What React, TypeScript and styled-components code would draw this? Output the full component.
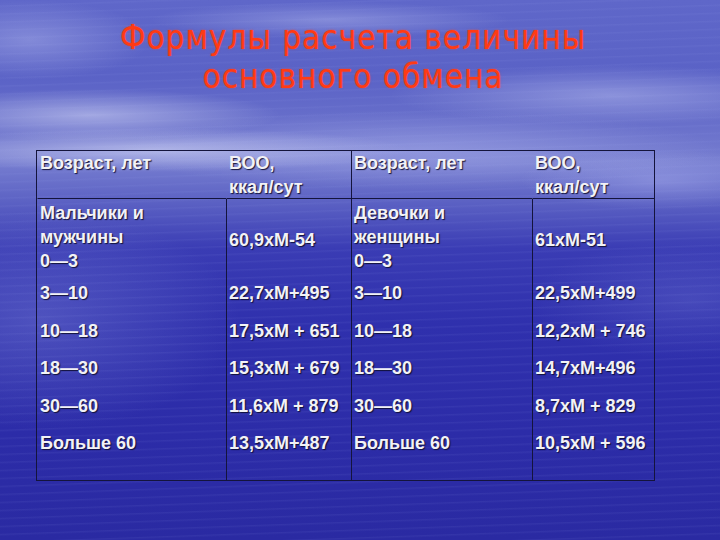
import React, { ReactElement } from 'react'
import styled, { createGlobalStyle } from 'styled-components'

const GlobalStyle = createGlobalStyle`
  html, body {
    margin: 0;
    padding: 0;
    width: 720px;
    height: 540px;
    overflow: hidden;
  }
`

const Slide = styled.div`
  width: 720px;
  height: 540px;
  box-sizing: border-box;
  display: flex;
  flex-direction: column;
  align-items: flex-start;
  padding: 18px 0 0 36px;
  background:
    radial-gradient(ellipse 190px 26px at 90px 115px, rgba(235, 238, 255, 0.45), transparent),
    radial-gradient(ellipse 260px 22px at 150px 150px, rgba(235, 238, 255, 0.5), transparent),
    radial-gradient(ellipse 220px 30px at 610px 95px, rgba(220, 225, 255, 0.35), transparent),
    radial-gradient(ellipse 180px 18px at 330px 20px, rgba(220, 225, 255, 0.3), transparent),
    radial-gradient(ellipse 120px 40px at 30px 40px, rgba(220, 225, 255, 0.3), transparent),
    radial-gradient(ellipse 300px 40px at 420px 150px, rgba(210, 215, 255, 0.3), transparent),
    radial-gradient(ellipse 140px 30px at 660px 180px, rgba(200, 205, 255, 0.3), transparent),
    radial-gradient(ellipse 200px 110px at 40px 320px, rgba(150, 160, 230, 0.3), transparent),
    radial-gradient(ellipse 160px 60px at 690px 300px, rgba(150, 160, 230, 0.2), transparent),
    repeating-linear-gradient(
      178deg,
      rgba(255, 255, 255, 0) 0px,
      rgba(255, 255, 255, 0) 5px,
      rgba(160, 170, 240, 0.08) 6px,
      rgba(255, 255, 255, 0) 8px
    ),
    linear-gradient(
      180deg,
      #5f67c9 0%,
      #5a62c6 14%,
      #6a71cb 24%,
      #767dd0 30%,
      #5d63c4 37%,
      #3a3cb4 46%,
      #2f30ad 60%,
      #2c2ca8 80%,
      #2a2aa2 100%
    );
`

const Title = styled.h1`
  width: 634px;
  margin: 0 0 54px 0;
  font-family: 'DejaVu Sans Condensed', 'DejaVu Sans', sans-serif;
  font-weight: normal;
  font-size: 33px;
  line-height: 39px;
  letter-spacing: 1px;
  text-align: center;
  color: #ff3a14;
  text-shadow: 0 0 2px rgba(255, 70, 30, 0.7);
`

const Table = styled.div`
  display: grid;
  grid-template-columns: 189px 125px 181px 122px;
  grid-template-rows: 48px 80px 37.5px 37.5px 37.5px 37.5px 51px;
  border: 1px solid #14143c;
  font-family: 'Liberation Sans', Arial, sans-serif;
  font-weight: bold;
  font-size: 18px;
  line-height: 24px;
  color: #f2f2f6;
  text-shadow: 1px 1px 1px rgba(15, 15, 50, 0.95);
`

const Cell = styled.div<{ $divider?: boolean; $head?: boolean; $middle?: boolean }>`
  box-sizing: border-box;
  display: flex;
  flex-direction: column;
  justify-content: ${p => (p.$middle ? 'center' : 'flex-start')};
  padding: ${p => (p.$head ? '0' : '2px')} 2px 0 2px;
  border-left: 1px solid ${p => (p.$divider ? '#14143c' : 'transparent')};
  border-bottom: ${p => (p.$head ? '1px solid #14143c' : 'none')};
  white-space: nowrap;
`

const headers = [
  { lines: ['Возраст, лет'], divider: false },
  { lines: ['ВОО,', 'ккал/сут'], divider: false },
  { lines: ['Возраст, лет'], divider: true },
  { lines: ['ВОО,', 'ккал/сут'], divider: false },
]

const rows: { cells: string[][]; middle?: boolean }[] = [
  {
    cells: [['Мальчики и', 'мужчины', '0—3'], ['60,9xM-54'], ['Девочки и', 'женщины', '0—3'], ['61xM-51']],
    middle: true,
  },
  { cells: [['3—10'], ['22,7xM+495'], ['3—10'], ['22,5xM+499']] },
  { cells: [['10—18'], ['17,5xM + 651'], ['10—18'], ['12,2xM + 746']] },
  { cells: [['18—30'], ['15,3xM + 679'], ['18—30'], ['14,7xM+496']] },
  { cells: [['30—60'], ['11,6xM + 879'], ['30—60'], ['8,7xM + 829']] },
  { cells: [['Больше 60'], ['13,5xM+487'], ['Больше 60'], ['10,5xM + 596']] },
]

const App = (): ReactElement => (
  <>
    <GlobalStyle />
    <Slide>
      <Title>
        Формулы расчета величины
        <br />
        основного обмена
      </Title>
      <Table>
        {headers.map((h, i) => (
          <Cell key={`h${i}`} $head $divider={h.divider}>
            {h.lines.map(l => (
              <span key={l}>{l}</span>
            ))}
          </Cell>
        ))}
        {rows.map((row, r) =>
          row.cells.map((lines, c) => (
            <Cell key={`${r}-${c}`} $divider={c > 0} $middle={row.middle && c % 2 === 1}>
              {lines.map(l => (
                <span key={l}>{l}</span>
              ))}
            </Cell>
          )),
        )}
      </Table>
    </Slide>
  </>
)

export default App
